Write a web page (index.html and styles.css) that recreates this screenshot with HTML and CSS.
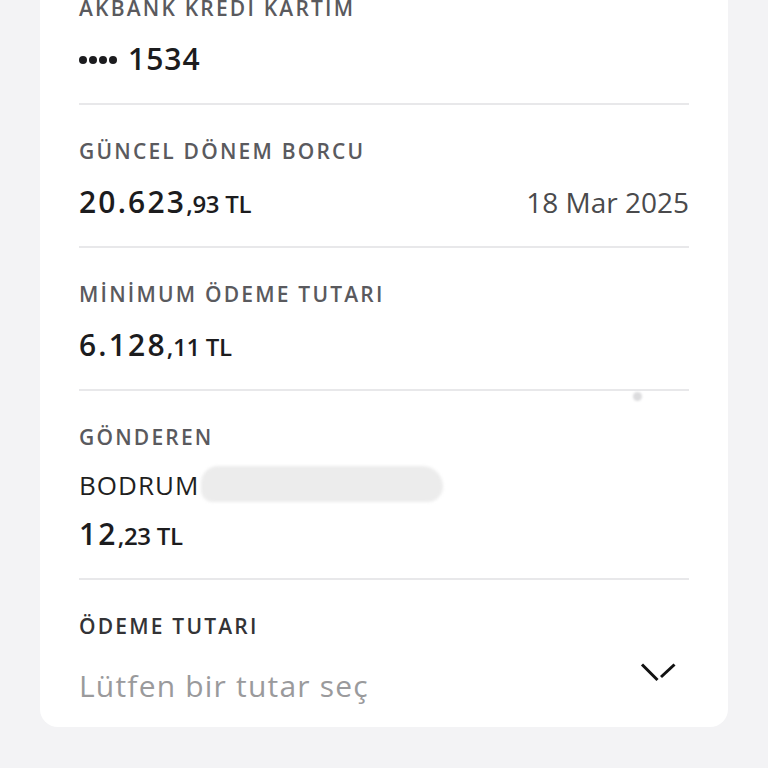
FILE: index.html
```html
<!DOCTYPE html>
<html lang="tr">
<head>
<meta charset="utf-8">
<title>Kredi Kartı Borç Ödeme</title>
<link rel="stylesheet" href="styles.css">
</head>
<body>
<main class="page">
  <section class="card">
    <div class="row">
      <div class="label">AKBANK KREDİ KARTIM</div>
      <div class="value card-no"><span class="dots" aria-label="••••"><i></i><i></i><i></i><i></i></span>1534</div>
    </div>
    <div class="row">
      <div class="label">GÜNCEL DÖNEM BORCU</div>
      <div class="value split">
        <span><span class="amt-main">20.623</span><span class="amt-sub">,93 TL</span></span>
        <span class="date">18 Mar 2025</span>
      </div>
    </div>
    <div class="row">
      <div class="label">MİNİMUM ÖDEME TUTARI</div>
      <div class="value"><span class="amt-main">6.128</span><span class="amt-sub">,11 TL</span></div>
    </div>
    <div class="row sender">
      <span class="speck"></span>
      <div class="label">GÖNDEREN</div>
      <div class="name">BODRUM<span class="redact"></span></div>
      <div class="value value-tight"><span class="amt-main">12</span><span class="amt-sub">,23 TL</span></div>
    </div>
    <div class="row last">
      <div class="label label-dark">ÖDEME TUTARI</div>
      <div class="select">
        <span class="placeholder">Lütfen bir tutar seç</span>
        <svg class="chevron" width="38" height="20" viewBox="0 0 38 20" aria-hidden="true">
          <path d="M2 1.5 L17.5 17" stroke="#111" stroke-width="3" fill="none"/>
          <path d="M21 14 L34.5 1.5" stroke="#111" stroke-width="3" fill="none"/>
        </svg>
      </div>
    </div>
  </section>
</main>
</body>
</html>
```

FILE: styles.css
```css
html, body {
  margin: 0;
  padding: 0;
  background: #f3f3f5;
  font-family: "Open Sans", "Liberation Sans", sans-serif;
  color: #1c1c1e;
}

.page {
  padding: 0 40px;
  height: 768px;
  overflow: hidden;
}

.card {
  margin-top: -38px;
  background: #ffffff;
  border-radius: 18px;
  padding: 0 39px 22px;
}

.row {
  position: relative;
  padding: 34px 0 26px;
  border-bottom: 2px solid #e8e8ea;
}

.row.last {
  border-bottom: none;
  padding-bottom: 0;
}

.label {
  font-size: 21px;
  line-height: 24px;
  font-weight: 600;
  letter-spacing: 2.2px;
  color: #5a5a5e;
}

.label-dark {
  color: #333336;
}

.value {
  margin-top: 21px;
  line-height: 36px;
  height: 36px;
  font-size: 30px;
  color: #1c1c1e;
}

.value-tight {
  margin-top: 14px;
}

.card-no {
  display: flex;
  align-items: center;
  font-weight: 600;
  letter-spacing: 1px;
}

.dots {
  display: inline-flex;
  gap: 2px;
  margin-right: 11px;
  margin-top: 2px;
}

.dots i {
  display: block;
  width: 8px;
  height: 8px;
  border-radius: 50%;
  background: #1c1c1e;
}

.split {
  display: flex;
  justify-content: space-between;
  align-items: baseline;
}

.amt-main {
  font-size: 30px;
  font-weight: 600;
  letter-spacing: 2.2px;
}

.amt-sub {
  font-size: 24px;
  font-weight: 600;
  letter-spacing: -0.3px;
}

.date {
  font-size: 28px;
  font-weight: 400;
  color: #4a4a4c;
}

.name {
  margin-top: 17px;
  font-size: 26px;
  line-height: 32px;
  letter-spacing: 1px;
  color: #1f1f21;
  white-space: nowrap;
}

.redact {
  display: inline-block;
  width: 242px;
  height: 36px;
  margin-left: 2px;
  vertical-align: -7px;
  background: #ececec;
  border-radius: 20px 24px 18px 14px;
  filter: blur(1.5px);
}

.speck {
  position: absolute;
  left: 554px;
  top: 1px;
  width: 9px;
  height: 9px;
  border-radius: 50%;
  background: #dcdcde;
  filter: blur(0.8px);
}

.select {
  margin-top: 23px;
  display: flex;
  justify-content: space-between;
  align-items: flex-start;
}

.placeholder {
  margin-top: 6px;
  font-size: 30px;
  line-height: 38px;
  letter-spacing: 1.2px;
  color: #9a9a9c;
}

.chevron {
  margin-top: 2px;
  margin-right: 11px;
  flex: none;
}
```
